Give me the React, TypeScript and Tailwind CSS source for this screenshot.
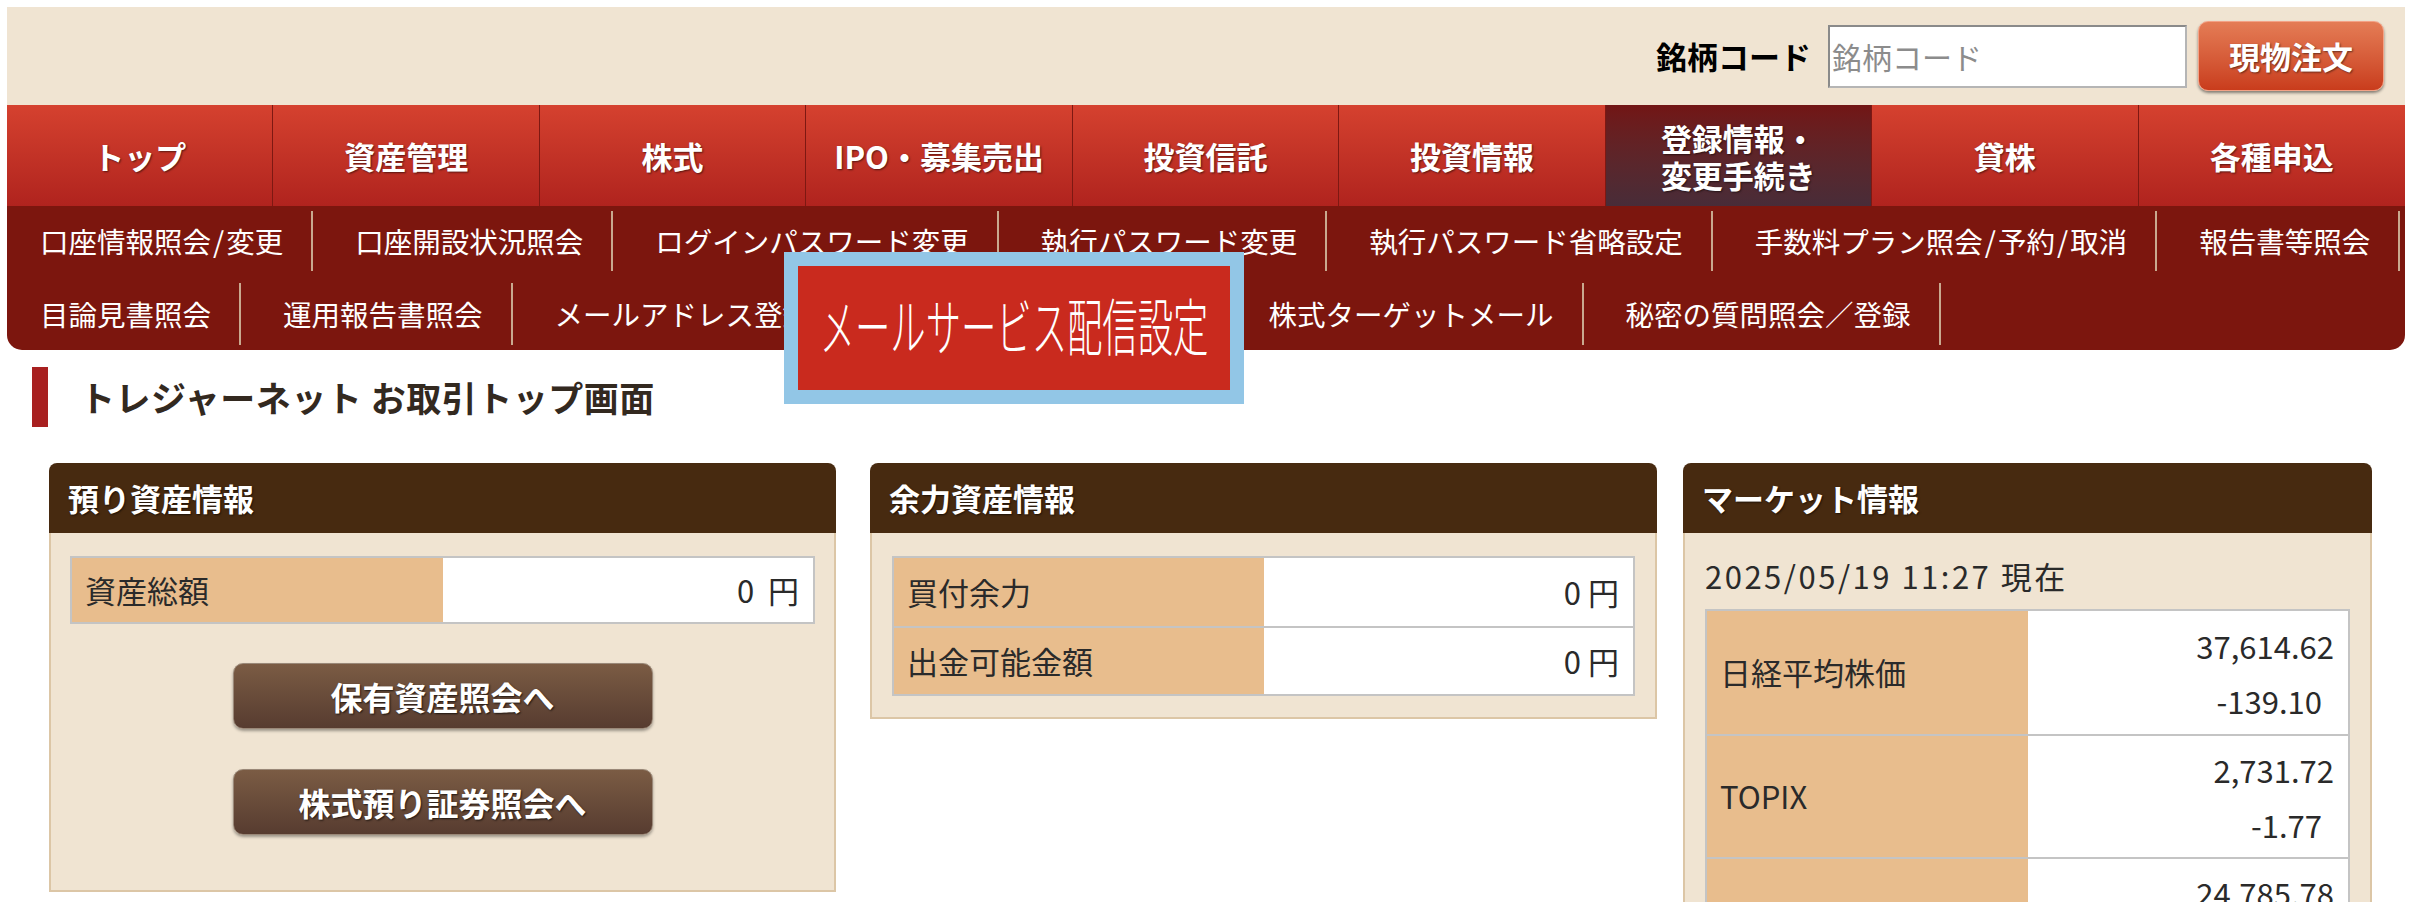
const navItems = ["トップ", "資産管理", "株式", "IPO・募集売出", "投資信託", "投資情報", "登録情報・\n変更手続き", "貸株", "各種申込"];

const subRow1 = ["口座情報照会/変更", "口座開設状況照会", "ログインパスワード変更", "執行パスワード変更", "執行パスワード省略設定", "手数料プラン照会/予約/取消", "報告書等照会"];
const subRow2 = ["目論見書照会", "運用報告書照会", "メールアドレス登録", "メールサービス配信設定", "株式ターゲットメール", "秘密の質問照会／登録"];

function withSlashes(t: string) {
  const parts = t.split("/");
  return parts.map((p, i) => (
    <span key={i}>
      {i > 0 && <span className="px-[2px]">/</span>}
      {p}
    </span>
  ));
}

function SubRow({ items, className }: { items: string[]; className: string }) {
  return (
    <div className={`flex ${className}`}>
      {items.map((t, i) => (
        <div
          key={t}
          className={`flex items-center whitespace-nowrap border-r-2 border-[#c9a98f] pr-[28px] text-[28.5px] text-white ${i === 0 ? "pl-[33px]" : "pl-[42px]"}`}
        >
          {withSlashes(t)}
        </div>
      ))}
    </div>
  );
}

function PanelHead({ title }: { title: string }) {
  return (
    <div className="flex h-[70px] items-center rounded-t-[8px] bg-[#472a10] px-[19px] text-[31px] font-bold text-white [text-shadow:1px_1px_2px_rgba(0,0,0,0.6)]">
      {title}
    </div>
  );
}

function BrownButton({ label }: { label: string }) {
  return (
    <button className="flex h-[66px] w-[420px] items-center justify-center rounded-[10px] border border-[#9a8878] bg-gradient-to-b from-[#7b5c44] to-[#573c30] text-[32px] font-bold text-white shadow-[0_2px_3px_rgba(0,0,0,0.35)] [text-shadow:1px_1px_2px_rgba(0,0,0,0.7)]">
      {label}
    </button>
  );
}

export default function App() {
  return (
    <div className="relative h-[902px] w-[2412px] overflow-hidden bg-white font-['Noto_Sans_CJK_JP','Liberation_Sans',sans-serif] text-[#2a2a2a]">
      {/* header */}
      <div className="mx-[7px] mt-[7px] flex h-[98px] items-center justify-end bg-[#f0e4d2] pr-[21px]">
        <span className="mr-[17px] text-[31px] font-bold text-black">銘柄コード</span>
        <input
          placeholder="銘柄コード"
          className="h-[63px] w-[359px] border-2 border-[#8a8a8a] border-b-[#b5b5b5] border-r-[#b5b5b5] bg-white px-[2px] text-[30px] outline-none placeholder:text-[#8c8c8c]"
        />
        <button className="ml-[11px] h-[70px] w-[186px] rounded-[10px] border border-[#f3a286] bg-gradient-to-b from-[#e47c55] to-[#c93c1c] text-[31px] font-bold text-white shadow-[0_2px_3px_rgba(0,0,0,0.45)] [text-shadow:1px_1px_2px_rgba(0,0,0,0.5)]">
          現物注文
        </button>
      </div>

      {/* main nav */}
      <div className="mx-[7px] grid h-[101px] grid-cols-9">
        {navItems.map((t, i) => (
          <div
            key={t}
            className={`flex items-center justify-center whitespace-pre-line text-center text-[31px] font-bold leading-[37px] text-white [text-shadow:1px_1px_2px_rgba(0,0,0,0.55)] ${i < 8 ? "border-r border-[#7e1812]" : ""} ${i === 6 ? "bg-gradient-to-b from-[#721515] to-[#482c38]" : "bg-gradient-to-b from-[#d5412f] to-[#b0231e]"}`}
          >
            {t}
          </div>
        ))}
      </div>

      {/* sub nav */}
      <div className="mx-[7px] rounded-b-[15px] bg-[#7c160e] pb-[5px] pt-[5px]">
        <SubRow items={subRow1} className="h-[60px]" />
        <SubRow items={subRow2} className="mt-[12px] h-[62px]" />
      </div>

      {/* page title */}
      <div className="ml-[32px] mt-[17px] flex items-center">
        <div className="h-[60px] w-[16px] bg-[#a82020]" />
        <h1 className="ml-[32px] text-[35px] font-bold tracking-[0.5px] text-[#33291f]">トレジャーネット お取引トップ画面</h1>
      </div>

      {/* panels */}
      <div className="mt-[36px] flex items-start">
        <div className="ml-[49px] w-[787px]">
          <PanelHead title="預り資産情報" />
          <div className="flex flex-col items-center border-2 border-t-0 border-[#dcc6a6] bg-[#f0e4d2] px-[19px] pb-[55px] pt-[23px]">
            <div className="flex h-[68px] w-full border-2 border-[#c4c4c4] text-[31px]">
              <div className="flex w-1/2 items-center bg-[#e8bd8d] pl-[13px]">資産総額</div>
              <div className="flex w-1/2 items-center justify-end whitespace-pre bg-white pr-[14px]">0  円</div>
            </div>
            <div className="mt-[39px]">
              <BrownButton label="保有資産照会へ" />
            </div>
            <div className="mt-[40px]">
              <BrownButton label="株式預り証券照会へ" />
            </div>
          </div>
        </div>

        <div className="ml-[34px] w-[787px]">
          <PanelHead title="余力資産情報" />
          <div className="border-2 border-t-0 border-[#dcc6a6] bg-[#f0e4d2] px-[20px] pb-[21px] pt-[23px]">
            <div className="border-2 border-[#c4c4c4] text-[31px]">
              {[
                ["買付余力", "0 円"],
                ["出金可能金額", "0 円"],
              ].map(([k, v], i) => (
                <div key={k} className={`flex h-[68px] ${i > 0 ? "border-t-2 border-[#c4c4c4]" : ""}`}>
                  <div className="flex w-1/2 items-center bg-[#e8bd8d] pl-[13px]">{k}</div>
                  <div className="flex w-1/2 items-center justify-end bg-white pr-[14px]">{v}</div>
                </div>
              ))}
            </div>
          </div>
        </div>

        <div className="ml-[26px] w-[689px]">
          <PanelHead title="マーケット情報" />
          <div className="border-2 border-t-0 border-[#dcc6a6] bg-[#f0e4d2] px-[20px] pb-[30px] pt-[20px]">
            <div className="text-[31px] leading-[46px] tracking-[2.5px]">2025/05/19 11:27 現在</div>
            <div className="mt-[10px] border-2 border-[#c4c4c4] text-[31px]">
              {[
                ["日経平均株価", "37,614.62", "-139.10"],
                ["TOPIX", "2,731.72", "-1.77"],
                ["JPX日経400", "24,785.78", "-98.43"],
              ].map(([k, a, b], i) => (
                <div key={k} className={`flex h-[123px] ${i > 0 ? "border-t-2 border-[#c4c4c4]" : ""}`}>
                  <div className="flex w-1/2 items-center bg-[#e8bd8d] pl-[13px]">{k}</div>
                  <div className="flex w-1/2 flex-col items-end justify-center bg-white pr-[14px] leading-[55px]">
                    <span>{a}</span>
                    <span className="pr-[12px]">{b}</span>
                  </div>
                </div>
              ))}
            </div>
          </div>
        </div>
      </div>

      {/* zoom callout */}
      <div className="absolute left-[784px] top-[252px] flex h-[152px] w-[460px] items-center justify-center border-[14px] border-[#92c6e6] bg-[#c92a1e]">
        <span className="mb-[8px] shrink-0 scale-x-[0.57] whitespace-nowrap text-[62px] font-light leading-none text-white">
          メールサービス配信設定
        </span>
      </div>
    </div>
  );
}
